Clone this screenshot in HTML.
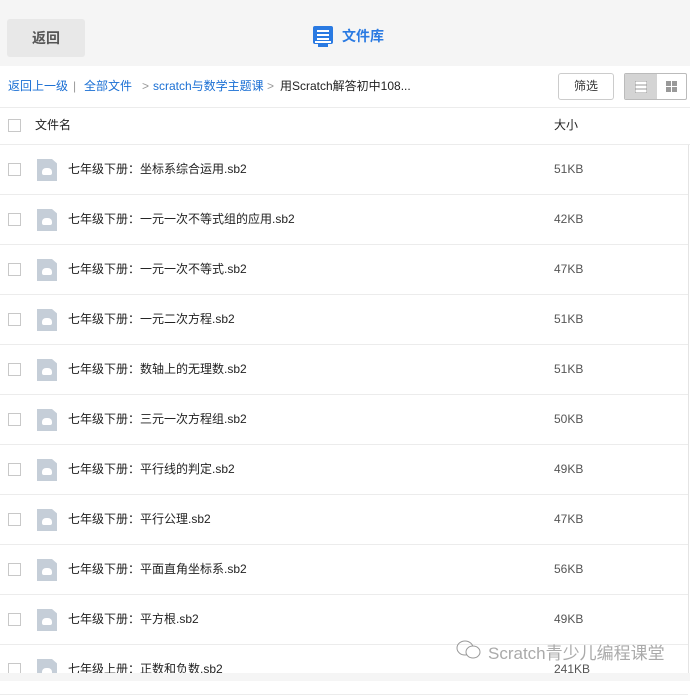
<!DOCTYPE html>
<html><head><meta charset="utf-8"><style>
*{margin:0;padding:0;box-sizing:border-box}
body{width:690px;height:681px;overflow:hidden;background:#fff;font-family:"Liberation Sans","Noto Sans CJK SC",sans-serif;position:relative;color:#222}
.hdr{position:absolute;left:0;top:0;width:690px;height:66px;background:#f5f5f5}
.back{position:absolute;left:7px;top:19px;width:78px;height:38px;background:#e8e8e8;border-radius:3px;text-align:center;line-height:38px;font-size:14px;color:#555;font-weight:bold}
.title{position:absolute;left:342px;top:26px;font-size:14px;font-weight:bold;color:#2a7ae2;line-height:20px}
.bc{position:absolute;top:78px;font-size:12px;color:#1a6fd4;line-height:16px;white-space:nowrap}
.g{color:#999}.d{color:#222}
.btn{position:absolute;left:558px;top:73px;width:56px;height:27px;border:1px solid #ccc;border-radius:3px;font-size:12px;text-align:center;line-height:25px;color:#333}
.tog{position:absolute;left:624px;top:73px;width:63px;height:27px;border:1px solid #bbb;border-radius:2px;overflow:hidden}
.tog .a{position:absolute;left:0;top:0;width:32px;height:25px;background:#d4d4d4}
.line{position:absolute;left:0;width:690px;height:1px;background:#ececec}
.cb{position:absolute;left:8px;width:13px;height:13px;border:1px solid #c8c8c8;background:#fff}
.row{position:absolute;left:0;width:688px;height:50px;border-bottom:1px solid #ececec}
.row .cb{top:18px}
.ic{position:absolute;left:37px;top:14px;width:20px;height:22px;background:#c5ced8;clip-path:polygon(0 0,75% 0,100% 20%,100% 100%,0 100%)}
.ic:after{content:"";position:absolute;left:5px;top:9px;width:10px;height:7px;background:#fff;border-radius:4px 4px 2px 2px}
.nm{position:absolute;left:68px;top:16px;font-size:12px;line-height:16px}
.sz{position:absolute;left:554px;top:16px;font-size:12px;line-height:16px;color:#555}
.rb{position:absolute;left:688px;top:145px;width:1px;height:530px;background:#e4e4e4}
.bot{position:absolute;left:0;top:673px;width:690px;height:8px;background:#f5f5f5}
.wm{position:absolute;left:488px;top:639px;font-size:17px;color:#aaa;white-space:nowrap}
</style></head><body>
<div class="hdr"><div class="back">返回</div>
<svg style="position:absolute;left:313px;top:26px" width="20" height="21" viewBox="0 0 20 21"><rect x="0" y="0" width="20" height="18" rx="2" fill="#2a7ae2"/><rect x="5" y="15" width="10" height="6" fill="#2a7ae2"/><rect x="4" y="4" width="12" height="2" fill="#fff"/><rect x="4" y="8" width="12" height="2" fill="#fff"/><rect x="4" y="12" width="12" height="2" fill="#fff"/><rect x="2" y="15" width="16" height="2" fill="#fff"/></svg>
<div class="title">文件库</div></div>
<div class="bc" style="left:8px">返回上一级</div>
<div class="bc g" style="left:73px">|</div>
<div class="bc" style="left:84px">全部文件</div>
<div class="bc g" style="left:142px">&gt;</div>
<div class="bc" style="left:153px">scratch与数学主题课</div>
<div class="bc g" style="left:267px">&gt;</div>
<div class="bc d" style="left:280px">用Scratch解答初中108...</div>
<div class="btn">筛选</div>
<div class="tog"><div class="a"></div>
<svg style="position:absolute;left:10px;top:7px" width="12" height="12"><rect x="0" y="0" width="12" height="12" fill="#fff" stroke="#999"/><line x1="0" y1="4" x2="12" y2="4" stroke="#999"/><line x1="0" y1="8" x2="12" y2="8" stroke="#999"/></svg>
<svg style="position:absolute;left:41px;top:7px" width="11" height="11"><rect x="0" y="0" width="5" height="5" fill="#999"/><rect x="6" y="0" width="5" height="5" fill="#999"/><rect x="0" y="6" width="5" height="5" fill="#999"/><rect x="6" y="6" width="5" height="5" fill="#999"/></svg></div>
<div class="line" style="top:107px"></div>
<div class="cb" style="top:119px"></div>
<div style="position:absolute;left:35px;top:117px;font-size:12px;line-height:16px">文件名</div>
<div style="position:absolute;left:554px;top:117px;font-size:12px;line-height:16px">大小</div>
<div class="line" style="top:144px"></div>
<div class="rb"></div>
<div class="row" style="top:145px"><div class="cb"></div><div class="ic"></div><div class="nm">七年级下册：坐标系综合运用.sb2</div><div class="sz">51KB</div></div>
<div class="row" style="top:195px"><div class="cb"></div><div class="ic"></div><div class="nm">七年级下册：一元一次不等式组的应用.sb2</div><div class="sz">42KB</div></div>
<div class="row" style="top:245px"><div class="cb"></div><div class="ic"></div><div class="nm">七年级下册：一元一次不等式.sb2</div><div class="sz">47KB</div></div>
<div class="row" style="top:295px"><div class="cb"></div><div class="ic"></div><div class="nm">七年级下册：一元二次方程.sb2</div><div class="sz">51KB</div></div>
<div class="row" style="top:345px"><div class="cb"></div><div class="ic"></div><div class="nm">七年级下册：数轴上的无理数.sb2</div><div class="sz">51KB</div></div>
<div class="row" style="top:395px"><div class="cb"></div><div class="ic"></div><div class="nm">七年级下册：三元一次方程组.sb2</div><div class="sz">50KB</div></div>
<div class="row" style="top:445px"><div class="cb"></div><div class="ic"></div><div class="nm">七年级下册：平行线的判定.sb2</div><div class="sz">49KB</div></div>
<div class="row" style="top:495px"><div class="cb"></div><div class="ic"></div><div class="nm">七年级下册：平行公理.sb2</div><div class="sz">47KB</div></div>
<div class="row" style="top:545px"><div class="cb"></div><div class="ic"></div><div class="nm">七年级下册：平面直角坐标系.sb2</div><div class="sz">56KB</div></div>
<div class="row" style="top:595px"><div class="cb"></div><div class="ic"></div><div class="nm">七年级下册：平方根.sb2</div><div class="sz">49KB</div></div>
<div class="row" style="top:645px"><div class="cb"></div><div class="ic"></div><div class="nm">七年级上册：正数和负数.sb2</div><div class="sz">241KB</div></div>
<div class="bot"></div>
<svg style="position:absolute;left:455px;top:639px" width="28" height="22"><ellipse cx="10" cy="9" rx="8" ry="7" fill="none" stroke="#999" stroke-width="1"/><ellipse cx="18" cy="13" rx="7" ry="6" fill="#fff" stroke="#999" stroke-width="1"/></svg>
<div class="wm">Scratch青少儿编程课堂</div>
</body></html>
